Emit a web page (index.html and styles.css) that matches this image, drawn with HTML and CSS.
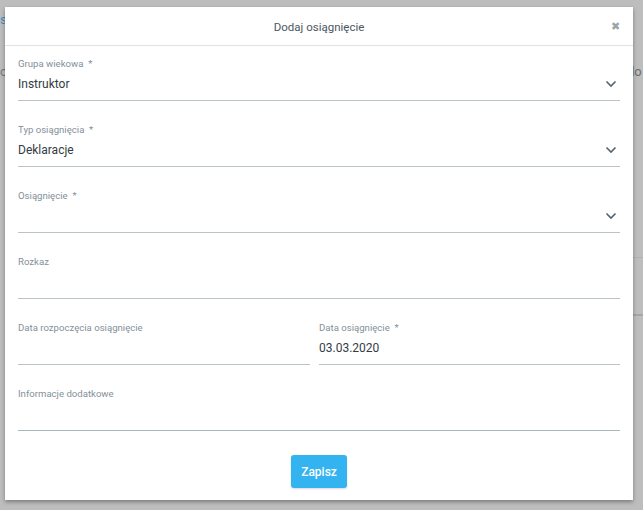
FILE: index.html
```html
<!DOCTYPE html>
<html lang="pl">
<head>
<meta charset="utf-8">
<title>Dodaj osiągnięcie</title>
<link rel="stylesheet" href="styles.css">
</head>
<body>
<div class="backdrop">
  <span class="bg-frag bg-s">s</span>
  <span class="bg-frag bg-to">o</span>
  <span class="bg-frag bg-do">do</span>
  <span class="bg-rule bg-rule-1"></span>
  <span class="bg-rule bg-rule-2"></span>
</div>
<div class="modal">
  <div class="modal-header">
    <span class="modal-title">Dodaj osiągnięcie</span>
    <span class="close">&#x2716;</span>
  </div>
  <form class="modal-body">
    <div class="field">
      <label class="label">Grupa wiekowa&nbsp; *</label>
      <div class="value"><span>Instruktor</span>
        <svg class="chev" width="12" height="8" viewBox="0 0 12 8"><path d="M1.5 1.5 L6 6 L10.5 1.5" fill="none" stroke="#56626c" stroke-width="1.6"/></svg>
      </div>
    </div>
    <div class="field">
      <label class="label">Typ osiągnięcia&nbsp; *</label>
      <div class="value"><span>Deklaracje</span>
        <svg class="chev" width="12" height="8" viewBox="0 0 12 8"><path d="M1.5 1.5 L6 6 L10.5 1.5" fill="none" stroke="#56626c" stroke-width="1.6"/></svg>
      </div>
    </div>
    <div class="field">
      <label class="label">Osiągnięcie&nbsp; *</label>
      <div class="value">
        <svg class="chev" width="12" height="8" viewBox="0 0 12 8"><path d="M1.5 1.5 L6 6 L10.5 1.5" fill="none" stroke="#56626c" stroke-width="1.6"/></svg>
      </div>
    </div>
    <div class="field">
      <label class="label">Rozkaz</label>
      <div class="value"></div>
    </div>
    <div class="row">
      <div class="field">
        <label class="label">Data rozpoczęcia osiągnięcie</label>
        <div class="value"></div>
      </div>
      <div class="field">
        <label class="label">Data osiągnięcie&nbsp; *</label>
        <div class="value"><span>03.03.2020</span></div>
      </div>
    </div>
    <div class="field field-last">
      <label class="label">Informacje dodatkowe</label>
      <div class="value"></div>
    </div>
    <div class="actions">
      <button type="button" class="btn">Zapisz</button>
    </div>
  </form>
</div>
</body>
</html>
```
FILE: styles.css
```css
html, body {
  margin: 0;
  padding: 0;
}
body {
  background: #bdbdbd;
  font-family: Roboto, "Liberation Sans", Arial, sans-serif;
  width: 643px;
  height: 510px;
  overflow: hidden;
  position: relative;
}
.backdrop {
  position: absolute;
  inset: 0;
}
.bg-frag {
  position: absolute;
  font-size: 13px;
  line-height: 16px;
}
.bg-s {
  left: 0;
  top: 12px;
  color: #3f8fc4;
}
.bg-to {
  left: 0;
  top: 64px;
  color: #7a7a7a;
}
.bg-do {
  left: 627px;
  top: 64px;
  color: #6e6e6e;
}
.bg-rule {
  position: absolute;
  left: 633px;
  width: 10px;
  height: 1px;
  background: #a8a8a8;
}
.bg-rule-1 { top: 257px; background: #b2b2b2; }
.bg-rule-2 { top: 314px; height: 2px; background: #a6a6a6; }

.modal {
  position: absolute;
  left: 5px;
  top: 7px;
  width: 628px;
  height: 493px;
  background: #fff;
  box-shadow: 0 2px 4px rgba(0,0,0,0.35);
  display: flex;
  flex-direction: column;
}
.modal-header {
  height: 38px;
  border-bottom: 1px solid #dfe3e6;
  display: flex;
  align-items: center;
  justify-content: center;
  position: relative;
}
.modal-title {
  font-size: 11.5px;
  color: #4a5762;
  padding-top: 1px;
}
.close {
  position: absolute;
  right: 13px;
  top: 13px;
  font-size: 11px;
  line-height: 14px;
  color: #9aa4ab;
}
.modal-body {
  padding: 11px 13px 0 13px;
  margin: 0;
  display: flex;
  flex-direction: column;
  gap: 22px;
}
.field {
  border-bottom: 1px solid #b9c3c8;
  padding-bottom: 6px;
  display: flex;
  flex-direction: column;
  gap: 3px;
}
.field-last {
  border-bottom-color: #a9b8bc;
}
.label {
  font-size: 9.6px;
  line-height: 14px;
  color: #84909a;
}
.value {
  font-size: 12px;
  line-height: 20px;
  height: 20px;
  color: #333c44;
  display: flex;
  align-items: center;
}
.chev {
  margin-left: auto;
  margin-right: 3px;
  margin-top: -1px;
}
.row {
  display: grid;
  grid-template-columns: 292px 1fr;
  gap: 9px;
}
.actions {
  display: flex;
  justify-content: center;
  margin-top: 2px;
}
.btn {
  width: 56px;
  height: 33px;
  border: none;
  border-radius: 3px;
  background: #33b3ef;
  color: #fff;
  font-family: Roboto, "Liberation Sans", Arial, sans-serif;
  font-size: 12px;
  font-weight: 500;
  padding: 0;
  box-shadow: 0 1px 2px rgba(0,0,0,0.15);
}
```
